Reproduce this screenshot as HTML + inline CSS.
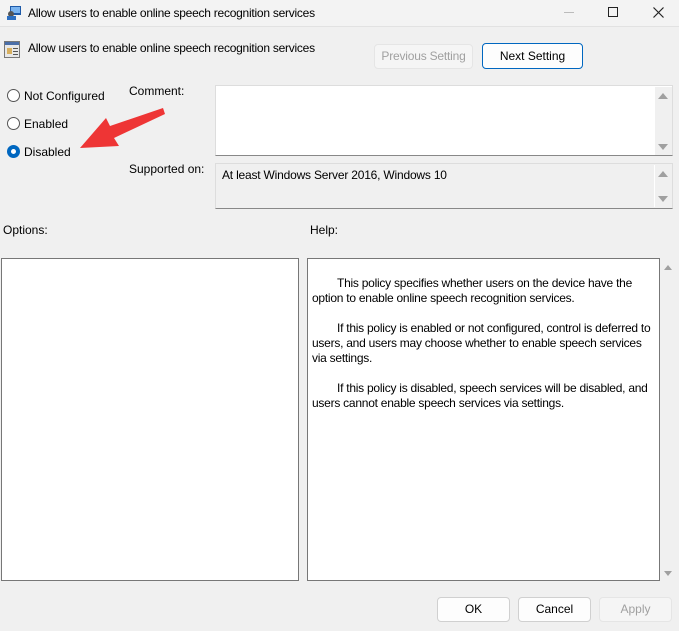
<!DOCTYPE html>
<html><head><style>
*{margin:0;padding:0;box-sizing:border-box}
body{width:679px;height:631px;background:#f0f0f0;font-family:"Liberation Sans",sans-serif;font-size:12px;color:#000;position:relative;overflow:hidden}
.a{position:absolute;white-space:nowrap}
.btn{position:absolute;border:1px solid #d0d0d0;background:#fdfdfd;border-radius:4px;text-align:center;font-size:12px}
.radio{position:absolute;width:13px;height:13px;border:1px solid #555;border-radius:50%;background:#fff}
.tri-up{position:absolute;width:0;height:0;border-left:5px solid transparent;border-right:5px solid transparent;border-bottom:6px solid #a0a0a0}
.tri-dn{position:absolute;width:0;height:0;border-left:5px solid transparent;border-right:5px solid transparent;border-top:6px solid #a0a0a0}
</style></head><body>
<div class="a" style="left:0;top:0;width:679px;height:27px;background:#f3f3f3;border-bottom:1px solid #e2e2e2"></div>
<svg class="a" style="left:6px;top:5px" width="16" height="16"><rect x="4" y="1" width="11" height="9" fill="#1e5aa8"/><rect x="5" y="2" width="9" height="6" fill="#7ab4f0"/><circle cx="5" cy="9" r="3" fill="#555"/><rect x="1" y="11" width="9" height="4" fill="#2d6fc0"/></svg>
<div class="a" style="left:28px;top:6px;font-size:12px;letter-spacing:-0.25px">Allow users to enable online speech recognition services</div>
<div class="a" style="left:564px;top:12px;width:10px;height:1px;background:#bbb"></div>
<div class="a" style="left:608px;top:7px;width:10px;height:10px;border:1.3px solid #222"></div>
<svg class="a" style="left:653px;top:7px" width="11" height="11"><path d="M0.5 0.5L10.5 10.5M10.5 0.5L0.5 10.5" stroke="#222" stroke-width="1.2"/></svg>

<svg class="a" style="left:4px;top:41px" width="16" height="17"><rect x="0.5" y="0.5" width="15" height="16" fill="#e8e8e8" stroke="#777"/><rect x="1" y="1" width="14" height="3" fill="#4a6ea8"/><rect x="3" y="7" width="5" height="6" fill="#d8b060"/><rect x="9" y="7" width="5" height="1" fill="#555"/><rect x="9" y="10" width="5" height="1" fill="#555"/><rect x="9" y="13" width="5" height="1" fill="#555"/></svg>
<div class="a" style="left:28px;top:41px;font-size:12px;letter-spacing:-0.25px">Allow users to enable online speech recognition services</div>

<div class="btn" style="left:374px;top:44px;width:99px;height:25px;line-height:23px;color:#a0a0a0;background:#f5f5f5;border-color:#e5e5e5;letter-spacing:-0.2px">Previous Setting</div>
<div class="btn" style="left:482px;top:43px;width:101px;height:26px;line-height:24px;border-color:#0067c0">Next Setting</div>

<div class="radio" style="left:7px;top:89px"></div>
<div class="a" style="left:24px;top:89px">Not Configured</div>
<div class="radio" style="left:7px;top:117px"></div>
<div class="a" style="left:24px;top:117px">Enabled</div>
<div class="radio" style="left:7px;top:145px;border:4px solid #0067c0"></div>
<div class="a" style="left:24px;top:145px">Disabled</div>

<svg class="a" style="left:70px;top:100px" width="100" height="60"><path d="M93 8 L40 26 L36 18 L10 48 L49 46 L44 38 L95 14 Z" fill="#ee3535"/></svg>

<div class="a" style="left:129px;top:84px">Comment:</div>
<div class="a" style="left:129px;top:162px">Supported on:</div>
<div class="a" style="left:215px;top:85px;width:458px;height:71px;background:#fff;border:1px solid #ddd;border-bottom:1px solid #888"></div>
<div class="a" style="left:655px;top:87px;width:17px;height:68px;background:#f0f0f0"></div>
<div class="tri-up" style="left:658px;top:93px"></div><div class="tri-dn" style="left:658px;top:144px"></div>
<div class="a" style="left:215px;top:163px;width:458px;height:46px;background:#f0f0f0;border:1px solid #ddd;border-bottom:1px solid #888"></div>
<div class="a" style="left:654px;top:165px;width:1px;height:42px;background:#fff"></div>
<div class="tri-up" style="left:658px;top:171px"></div><div class="tri-dn" style="left:658px;top:196px"></div>
<div class="a" style="left:222px;top:168px;letter-spacing:-0.2px">At least Windows Server 2016, Windows 10</div>

<div class="a" style="left:3px;top:223px">Options:</div>
<div class="a" style="left:310px;top:223px">Help:</div>
<div class="a" style="left:1px;top:258px;width:298px;height:323px;background:#fff;border:1px solid #777"></div>
<div class="a" style="left:307px;top:258px;width:353px;height:323px;background:#fff;border:1px solid #777"></div>
<div class="tri-up" style="left:664px;top:265px;border-left-width:4px;border-right-width:4px;border-bottom-width:5px"></div>
<div class="tri-dn" style="left:664px;top:571px;border-left-width:4px;border-right-width:4px;border-top-width:5px"></div>
<div class="a" style="left:312px;top:276px;line-height:15px;white-space:normal;width:346px;letter-spacing:-0.25px">
<p style="text-indent:25px">This policy specifies whether users on the device have the option to enable online speech recognition services.</p>
<p style="text-indent:25px;margin-top:15px">If this policy is enabled or not configured, control is deferred to users, and users may choose whether to enable speech services via settings.</p>
<p style="text-indent:25px;margin-top:15px">If this policy is disabled, speech services will be disabled, and users cannot enable speech services via settings.</p>
</div>

<div class="btn" style="left:437px;top:597px;width:73px;height:25px;line-height:23px">OK</div>
<div class="btn" style="left:518px;top:597px;width:73px;height:25px;line-height:23px">Cancel</div>
<div class="btn" style="left:599px;top:597px;width:73px;height:25px;line-height:23px;color:#a0a0a0;background:#f5f5f5;border-color:#e5e5e5">Apply</div>
</body></html>
